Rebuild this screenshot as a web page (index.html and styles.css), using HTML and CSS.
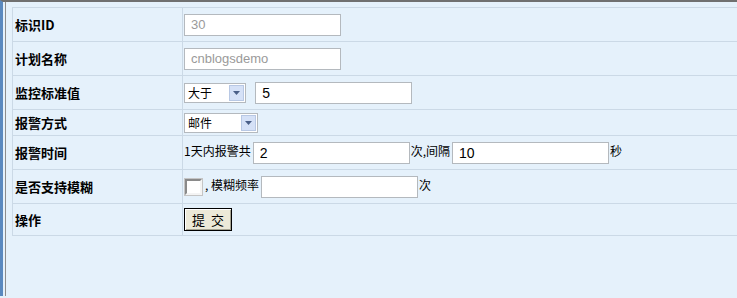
FILE: index.html
```html
<!DOCTYPE html>
<html lang="zh-CN">
<head>
  <meta charset="UTF-8">
  <title>监控计划编辑</title>
  <link rel="stylesheet" href="styles.css">
</head>
<body>
  <div class="frame">
    <div class="panel">
      <table class="form-table">
        <tr>
          <td class="label">标识ID</td>
          <td><input class="text-box readonly" type="text" value="30" readonly></td>
        </tr>
        <tr>
          <td class="label">计划名称</td>
          <td><input class="text-box readonly" type="text" value="cnblogsdemo" readonly></td>
        </tr>
        <tr>
          <td class="label">监控标准值</td>
          <td>
            <select class="combo combo-small">
              <option>大于</option>
              <option>小于</option>
              <option>等于</option>
            </select>
            <input class="text-box" type="text" value="5">
          </td>
        </tr>
        <tr class="short-row">
          <td class="label">报警方式</td>
          <td>
            <select class="combo combo-wide">
              <option>邮件</option>
              <option>短信</option>
            </select>
          </td>
        </tr>
        <tr>
          <td class="label">报警时间</td>
          <td class="inline-text">1天内报警共<input class="text-box" type="text" value="2">次,间隔<input class="text-box" type="text" value="10">秒</td>
        </tr>
        <tr>
          <td class="label">是否支持模糊</td>
          <td class="inline-text"><input class="check" type="checkbox">, 模糊频率<input class="text-box" type="text" value="">次</td>
        </tr>
        <tr class="last-row">
          <td class="label">操作</td>
          <td><button class="submit-button" type="button">提&nbsp;交</button></td>
        </tr>
      </table>
    </div>
  </div>
</body>
</html>
```
FILE: styles.css
```css
body {
  margin: 0;
  background-color: #e5f1fb;
  font-family: "Liberation Sans", "Noto Sans CJK SC", sans-serif;
  font-size: 12px;
  color: #000;
}
.frame {
  border-left: 3px solid #5a89bf;
  border-top: 2px solid #707070;
  padding-left: 2px;
  height: 296px;
  box-sizing: border-box;
}
.panel {
  border-left: 1px solid #8c8c8c;
  height: 100%;
  padding: 5px 0 0 6px;
  box-sizing: border-box;
}
.form-table {
  width: 100%;
  border-collapse: collapse;
  border-top: 1px solid #cbd9e6;
  border-left: 1px solid #cbd9e6;
}
.form-table td {
  height: 33px;
  padding: 0 0 0 1px;
  border-bottom: 1px solid #cbd9e6;
  vertical-align: middle;
}
.form-table td.label {
  width: 167px;
  padding-left: 2px;
  border-right: 1px solid #cbd9e6;
  font-family: "Noto Sans CJK SC", sans-serif;
  font-weight: bold;
  font-size: 13px;
}
.short-row td {
  height: 25px;
}
.last-row td {
  height: 31px;
}
.inline-text {
  font-family: "Noto Sans CJK SC", sans-serif;
  font-size: 12px;
}
.text-box {
  width: 157px;
  height: 22px;
  box-sizing: border-box;
  border: 1px solid #b4b9be;
  padding: 0 6px;
  margin: 0;
  font-family: "Liberation Sans", sans-serif;
  font-size: 14px;
  color: #000;
  background: #fff;
  vertical-align: middle;
}
.text-box.readonly {
  font-size: 13px;
  color: #9a9a9a;
}
.inline-text .text-box {
  margin: 0 1px 0 2px;
}
.combo {
  -webkit-appearance: none;
  appearance: none;
  height: 20px;
  box-sizing: border-box;
  border: 1px solid #b4b9be;
  margin: 0 6px 0 0;
  padding: 0 0 0 3px;
  font-family: "Noto Sans CJK SC", sans-serif;
  font-size: 12px;
  vertical-align: middle;
  background: #fff url("data:image/svg+xml;utf8,<svg xmlns='http://www.w3.org/2000/svg' width='15' height='16'><rect x='0.5' y='0.5' width='14' height='15' fill='%23d5e1f7' stroke='%23b8c8e4'/><path d='M4 6h7l-3.5 4z' fill='%234a5f88'/></svg>") no-repeat right 1px center;
}
.combo-small {
  width: 62px;
}
.combo-wide {
  width: 74px;
}
.check {
  -webkit-appearance: none;
  appearance: none;
  width: 17px;
  height: 16px;
  margin: 0 3px 0 1px;
  box-sizing: border-box;
  border: 2px solid;
  border-color: #8a8a8a #f4f4f4 #f4f4f4 #8a8a8a;
  outline: 1px solid #c5c5c5;
  background: #fff;
  vertical-align: middle;
}
.submit-button {
  width: 48px;
  height: 23px;
  padding: 0;
  border: 1px solid #000;
  box-shadow: inset 1px 1px #fff, inset -1px -1px #a6a391;
  background: #ece9d8;
  font-family: "Noto Sans CJK SC", sans-serif;
  font-size: 13px;
  word-spacing: 3px;
  color: #000;
}
```
